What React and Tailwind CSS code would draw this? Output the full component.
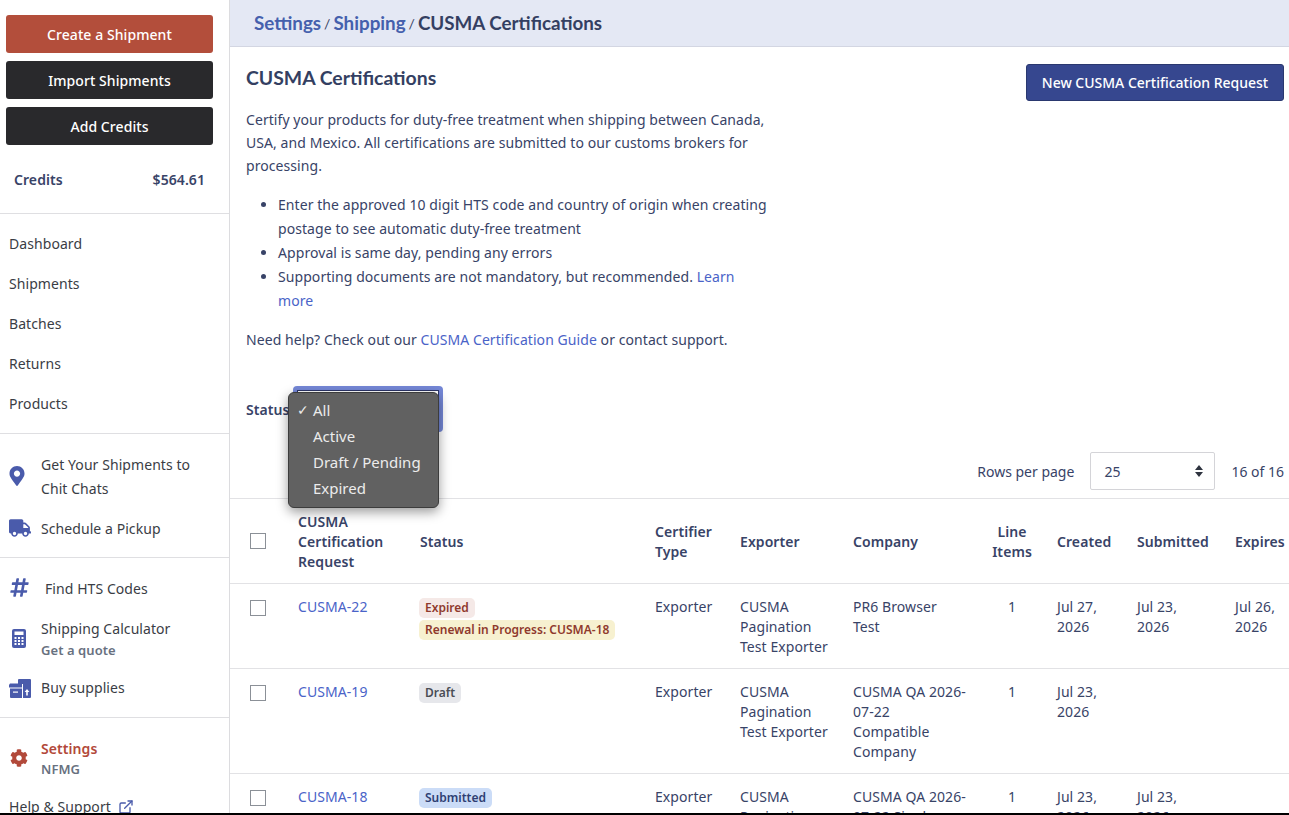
import { FaMapMarkerAlt, FaTruck, FaHashtag, FaCog } from 'react-icons/fa'
import { ExternalLink } from 'lucide-react'

const BADGE = {
  Expired: 'bg-[#f5e9e7] text-[#8f3a2d]',
  Renewal: 'bg-[#f7f1d0] text-[#8f3a2d]',
  Draft: 'bg-[#e6e7eb] text-[#4a4d55]',
  Submitted: 'bg-[#cbdcf7] text-[#2f3f73]',
}

const ROWS = [
  {
    id: 'CUSMA-22',
    badges: [['Expired', 'Expired'], ['Renewal', 'Renewal in Progress: CUSMA-18']],
    exporter: 'CUSMA Pagination Test Exporter',
    company: 'PR6 Browser Test',
    created: 'Jul 27, 2026',
    submitted: 'Jul 23, 2026',
    expires: 'Jul 26, 2026',
    height: 'h-[85px]',
  },
  {
    id: 'CUSMA-19',
    badges: [['Draft', 'Draft']],
    exporter: 'CUSMA Pagination Test Exporter',
    company: 'CUSMA QA 2026-07-22 Compatible Company',
    created: 'Jul 23, 2026',
    height: 'h-[105px]',
  },
  {
    id: 'CUSMA-18',
    badges: [['Submitted', 'Submitted']],
    exporter: 'CUSMA Pagination Test Exporter',
    company: 'CUSMA QA 2026-07-22 Single Company',
    created: 'Jul 23, 2026',
    submitted: 'Jul 23, 2026',
    height: 'h-[105px]',
  },
]

function SupplyIcon() {
  return (
    <svg width="22" height="19" viewBox="0 0 22 19" fill="#4a5bab">
      <path d="M9 1a1 1 0 0 1 1-1h11a1 1 0 0 1 1 1v17a1 1 0 0 1-1 1h-7V5H9z" />
      <path d="M0 6l1-1.500h12V8.500H0zM1 9.500h12V19H2a1 1 0 0 1-1-1z" />
      <path d="M4 12.500h5v1.200H4z" fill="#fff" />
      <path d="M18 10l2.400 3h-1.600v3.500h-1.600V13h-1.600z" fill="#fff" />
    </svg>
  )
}

function CalculatorIcon() {
  return (
    <svg width="14" height="19" viewBox="0 0 14 19" className="ml-[3px] mt-[-3px]">
      <rect width="14" height="19" rx="2" fill="#4a5bab" />
      <rect x="2.500" y="2.500" width="9" height="3.500" fill="#fff" />
      {[8, 11, 14].map((y) =>
        [2.5, 6, 9.5].map((x) => (
          <rect key={`${x}-${y}`} x={x} y={y} width="2" height="2" fill="#fff" />
        ))
      )}
    </svg>
  )
}

function NavIconRow({ icon, children, className = '' }) {
  return (
    <div className={`flex items-center ${className}`}>
      <div className="w-[41px] pl-[9px] shrink-0 flex items-center text-[#4a5bab]">{icon}</div>
      <div className="min-w-0">{children}</div>
    </div>
  )
}

function Sidebar() {
  return (
    <aside className="w-[230px] shrink-0 border-r border-[#dcdcdf] h-full overflow-hidden text-[#3a3d45]">
      <div className="pt-[15px] pl-[6px] pr-4 flex flex-col gap-2">
        <button className="h-[38px] rounded-[3px] bg-[#b34e3b] text-white font-medium">Create a Shipment</button>
        <button className="h-[38px] rounded-[3px] bg-[#29292c] text-white font-medium">Import Shipments</button>
        <button className="h-[38px] rounded-[3px] bg-[#29292c] text-white font-medium">Add Credits</button>
      </div>
      <div className="flex justify-between pl-[14px] pr-[24px] h-[69px] items-center font-semibold text-[#384367] border-b border-[#dfdfe2]">
        <span>Credits</span>
        <span>$564.61</span>
      </div>
      <nav className="h-[220px] pt-[9px] pl-[9px] border-b border-[#dfdfe2]">
        {['Dashboard', 'Shipments', 'Batches', 'Returns', 'Products'].map((n) => (
          <div key={n} className="h-[40px] flex items-center">{n}</div>
        ))}
      </nav>
      <div className="h-[124px] border-b border-[#dfdfe2] pt-[19px]">
        <NavIconRow icon={<FaMapMarkerAlt size={20} className="ml-[-2px] mt-[-3px]" />}>
          <div className="leading-[24px]">Get Your Shipments to<br />Chit Chats</div>
        </NavIconRow>
        <NavIconRow icon={<FaTruck size={22} className="mt-[-3px]" />} className="mt-[16px]">
          <div className="leading-[24px]">Schedule a Pickup</div>
        </NavIconRow>
      </div>
      <div className="h-[160px] border-b border-[#dfdfe2] pt-[19px]">
        <NavIconRow icon={<FaHashtag size={21} className="mt-[-4px]" />}>
          <div className="leading-[24px] pl-[4px]">Find HTS Codes</div>
        </NavIconRow>
        <NavIconRow icon={<CalculatorIcon />} className="mt-[18px]">
          <div className="leading-[20px]">Shipping Calculator</div>
          <div className="text-[13px] leading-[20px] mt-[1px] font-semibold text-[#68717f]">Get a quote</div>
        </NavIconRow>
        <NavIconRow icon={<SupplyIcon />} className="mt-[16px]">
          <div className="leading-[24px]">Buy supplies</div>
        </NavIconRow>
      </div>
      <div className="pt-[21px]">
        <NavIconRow icon={<FaCog size={18} className="ml-[1px] mt-[-2px] text-[#b2493a]" />}>
          <div className="leading-[20px] font-semibold text-[#b2493a]">Settings</div>
          <div className="text-[13px] leading-[20px] font-semibold text-[#68717f]">NFMG</div>
        </NavIconRow>
        <div className="pl-[9px] mt-[16px] leading-[24px] flex items-center gap-[7px]">
          Help &amp; Support
          <ExternalLink size={16} className="text-[#4a5bab]" />
        </div>
      </div>
    </aside>
  )
}

function Intro() {
  return (
    <div className="flex justify-between pl-4 pr-[5px]">
      <div className="w-[523px] text-[#384367]">
        <h1 className="font-['Lato'] font-bold text-[19.4px] tracking-normal leading-[28px] mt-[17px] text-[#343f62]">CUSMA Certifications</h1>
        <p className="mt-[16px] leading-[23px]">
          Certify your products for duty-free treatment when shipping between Canada, USA, and Mexico. All certifications are submitted to our customs brokers for processing.
        </p>
        <ul className="list-disc pl-8 mt-[16px] leading-[24px]">
          <li>Enter the approved 10 digit HTS code and country of origin when creating postage to see automatic duty-free treatment</li>
          <li>Approval is same day, pending any errors</li>
          <li>Supporting documents are not mandatory, but recommended. <a className="text-[#4a63c8]">Learn more</a></li>
        </ul>
        <p className="mt-[15px] leading-[24px]">
          Need help? Check out our <a className="text-[#4a63c8]">CUSMA Certification Guide</a> or contact support.
        </p>
      </div>
      <button className="mt-[17px] h-[37px] w-[258px] rounded-[3px] bg-[#36478f] border border-[#2a386f] text-white font-medium tracking-normal">
        New CUSMA Certification Request
      </button>
    </div>
  )
}

function StatusFilter() {
  return (
    <div className="relative h-[46px] mt-[34px] pl-4 flex items-center text-[#384367]">
      <span className="font-semibold w-[47px]">Status</span>
      <div className="w-[150px] h-[46px] rounded-[4px] bg-[#7487d6] p-[4px]">
        <div className="h-full bg-white border border-[#2c3567]" />
      </div>
      <div className="absolute left-[58px] top-[6px] w-[151px] h-[116px] rounded-[6px] border border-[#3c3c3c] bg-[#616161] text-[#ececec] text-[15px] tracking-normal shadow-[0_4px_12px_rgba(0,0,0,0.4)] pt-[4px] leading-[26px]">
        <div className="relative pl-[24px]">
          <span className="absolute left-[8px] text-[14px]">✓</span>
          All
        </div>
        <div className="pl-[24px]">Active</div>
        <div className="pl-[24px]">Draft / Pending</div>
        <div className="pl-[24px]">Expired</div>
      </div>
    </div>
  )
}

function Pager() {
  return (
    <div className="h-[66px] flex items-center justify-end pr-[5px] pt-[12px] gap-[16px] text-[#384367] tracking-normal">
      <span>Rows per page</span>
      <div className="w-[125px] h-[38px] border border-[#d4d4d8] rounded-[2px] flex items-center justify-between pl-[13px] pr-[11px]">
        25
        <svg width="8" height="12" viewBox="0 0 8 12" fill="#2f3440">
          <path d="M4 0l4 5H0zM4 12L0 7h8z" />
        </svg>
      </div>
      <span>16 of 16</span>
    </div>
  )
}

function Checkbox() {
  return <div className="w-4 h-4 border border-[#8b9097] bg-white" />
}

function Table() {
  return (
    <table className="border-t border-[#e2e2e5] w-[1075px] table-fixed border-collapse text-[#384367]">
      <colgroup>
        <col className="w-[52px]" />
        <col className="w-[122px]" />
        <col className="w-[235px]" />
        <col className="w-[85px]" />
        <col className="w-[113px]" />
        <col className="w-[144px]" />
        <col className="w-[60px]" />
        <col className="w-[80px]" />
        <col className="w-[98px]" />
        <col className="w-[86px]" />
      </colgroup>
      <thead>
        <tr className="h-[85px] border-b border-[#e2e2e5] leading-[20px] text-left">
          <th className="pl-5 font-semibold"><Checkbox /></th>
          <th className="pl-4 pt-[2px] font-semibold">CUSMA Certification Request</th>
          <th className="pl-4 pt-[2px] font-semibold">Status</th>
          <th className="pl-4 pt-[2px] font-semibold">Certifier Type</th>
          <th className="pl-4 pt-[2px] font-semibold">Exporter</th>
          <th className="pl-4 pt-[2px] font-semibold">Company</th>
          <th className="pl-[10px] pr-2 pt-[2px] text-center font-semibold">Line Items</th>
          <th className="pl-4 pt-[2px] font-semibold">Created</th>
          <th className="pl-4 pt-[2px] font-semibold">Submitted</th>
          <th className="pl-4 pt-[2px] font-semibold">Expires</th>
        </tr>
      </thead>
      <tbody>
        {ROWS.map((r) => (
          <tr key={r.id} className={`${r.height} border-b border-[#e2e2e5] leading-[20px] align-top`}>
            <td className="pl-5 pt-[16px]"><Checkbox /></td>
            <td className="pl-4 pt-[13px] text-[#4a63c8]">{r.id}</td>
            <td className="pl-[15px] pt-[14px]">
              <div className="flex flex-col items-start gap-[2px]">
                {r.badges.map(([k, label]) => (
                  <span key={label} className={`text-[12px] tracking-normal leading-[20px] font-semibold px-[6px] rounded-[5px] ${BADGE[k]}`}>
                    {label}
                  </span>
                ))}
              </div>
            </td>
            <td className="pl-4 pt-[13px]">Exporter</td>
            <td className="pl-4 pt-[13px]">{r.exporter}</td>
            <td className="pl-4 pr-[14px] pt-[13px]">{r.company}</td>
            <td className="pl-[2px] pt-[13px] text-center">1</td>
            <td className="px-4 pt-[13px]">{r.created}</td>
            <td className="px-4 pt-[13px]">{r.submitted}</td>
            <td className="px-4 pt-[13px]">{r.expires}</td>
          </tr>
        ))}
      </tbody>
    </table>
  )
}

export default function App() {
  return (
    <div className="h-[815px] w-[1289px] overflow-hidden flex flex-col bg-black font-['Noto_Sans',sans-serif] text-[14px] tracking-[0.07px]">
      <div className="h-[813px] bg-white flex overflow-hidden">
        <Sidebar />
        <main className="flex-1 min-w-0 overflow-hidden">
          <div className="h-[47px] bg-[#e4e8f4] border-b border-[#d3d6e2] pl-6 flex items-center font-['Lato'] text-[18.8px] tracking-normal font-bold text-[#343f62]">
            <a className="text-[#4560ad]">Settings</a>
            <span className="text-[14px] font-normal mx-[3px]">/</span>
            <a className="text-[#4560ad]">Shipping</a>
            <span className="text-[14px] font-normal mx-[3px]">/</span>
            CUSMA Certifications
          </div>
          <Intro />
          <StatusFilter />
          <Pager />
          <Table />
        </main>
      </div>
    </div>
  )
}
